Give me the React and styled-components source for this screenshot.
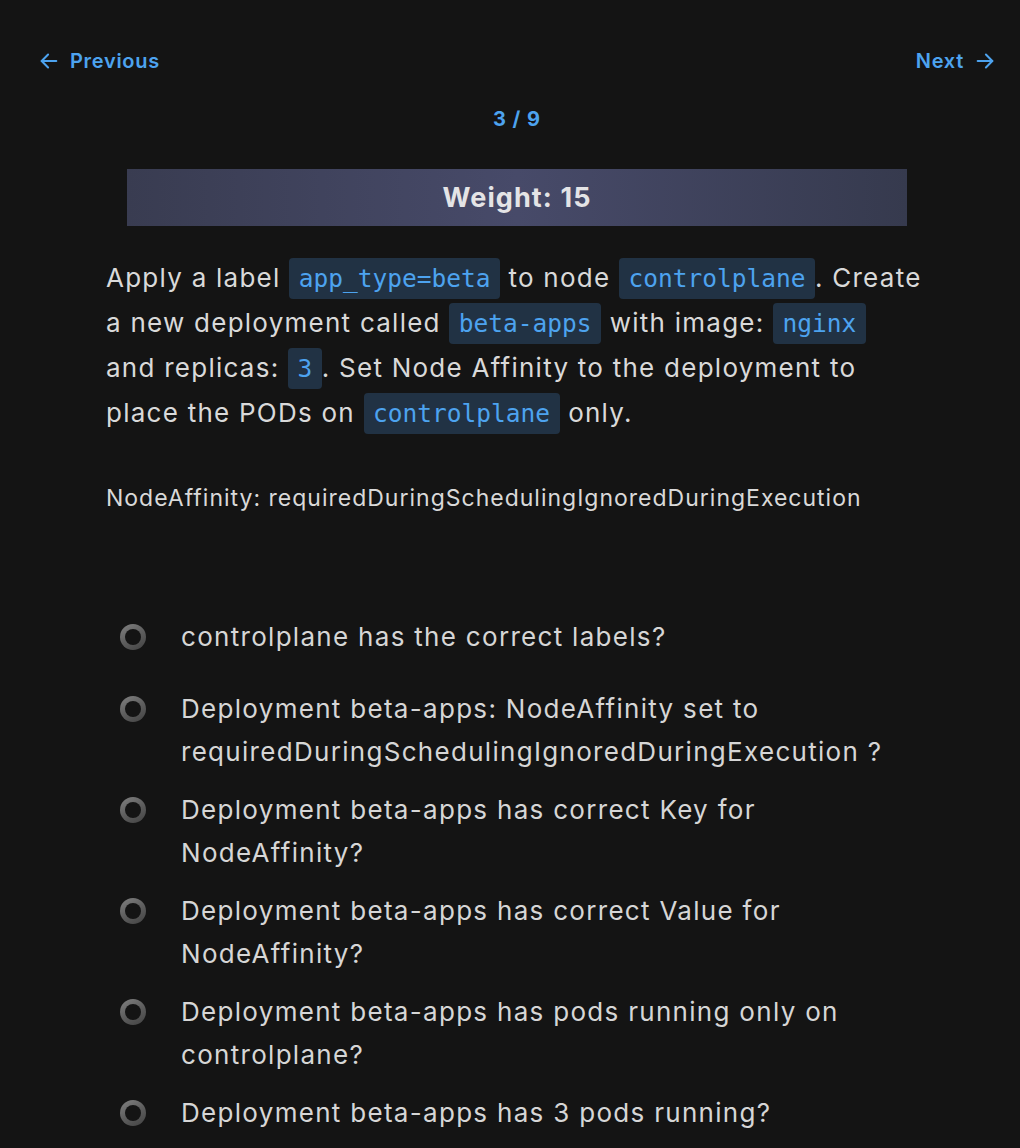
import React from "react";
import styled, { createGlobalStyle } from "styled-components";

const checks = [
  "controlplane has the correct labels?",
  "Deployment beta-apps: NodeAffinity set to requiredDuringSchedulingIgnoredDuringExecution ?",
  "Deployment beta-apps has correct Key for NodeAffinity?",
  "Deployment beta-apps has correct Value for NodeAffinity?",
  "Deployment beta-apps has pods running only on controlplane?",
  "Deployment beta-apps has 3 pods running?",
];

const GlobalStyle = createGlobalStyle`
  html, body {
    margin: 0;
    background: #141414;
  }
  body {
    font-family: "Inter", "Noto Sans", sans-serif;
    color: #d9d9d9;
  }
`;

const ArrowLeft = () => (
  <svg width="22" height="22" viewBox="0 0 24 24" fill="none" stroke="currentColor" strokeWidth="2.2" strokeLinecap="round" strokeLinejoin="round">
    <path d="M20 12H4" />
    <path d="M11 19l-7-7 7-7" />
  </svg>
);

const ArrowRight = () => (
  <svg width="22" height="22" viewBox="0 0 24 24" fill="none" stroke="currentColor" strokeWidth="2.2" strokeLinecap="round" strokeLinejoin="round">
    <path d="M4 12h16" />
    <path d="M13 5l7 7-7 7" />
  </svg>
);

const App = () => {
  return (
    <Page>
      <GlobalStyle />
      <NavBar>
        <NavLink>
          <ArrowLeft />
          Previous
        </NavLink>
        <NavLink>
          Next
          <ArrowRight />
        </NavLink>
      </NavBar>
      <Counter>3 / 9</Counter>
      <Question>
        <WeightBar>Weight: 15</WeightBar>
        <Prompt>
          Apply a label <Code>app_type=beta</Code> to node <Code>controlplane</Code>. Create
          a new deployment called <Code>beta-apps</Code> with image: <Code>nginx</Code>{" "}
          <NoWrap>and replicas:</NoWrap> <Code>3</Code>. Set Node Affinity to the deployment
          to place the PODs on <Code>controlplane</Code> only.
        </Prompt>
        <Note>NodeAffinity: requiredDuringSchedulingIgnoredDuringExecution</Note>
      </Question>
      <CheckList>
        {checks.map((text, index) => (
          <CheckItem key={index}>
            <Radio />
            <CheckText>{text}</CheckText>
          </CheckItem>
        ))}
      </CheckList>
    </Page>
  );
};

export default App;

const Page = styled.div`
  padding: 45px 24px 0 38px;
  min-height: 1148px;
  box-sizing: border-box;
`;

const NavBar = styled.div`
  display: flex;
  justify-content: space-between;
  align-items: center;
`;

const NavLink = styled.a`
  display: flex;
  align-items: center;
  gap: 10px;
  color: #4da3ef;
  font-size: 20px;
  font-weight: 600;
  letter-spacing: 0.7px;
  line-height: 32px;
  cursor: pointer;
`;

const Counter = styled.div`
  margin-top: 29px;
  text-align: center;
  color: #4da3ef;
  font-size: 20px;
  font-weight: 700;
  letter-spacing: 1px;
  line-height: 26px;
`;

const Question = styled.div`
  width: 822px;
  margin: 37px auto 0;
`;

const WeightBar = styled.div`
  width: 780px;
  height: 57px;
  margin: 0 auto;
  display: flex;
  align-items: center;
  justify-content: center;
  background: linear-gradient(90deg, #393c51 0%, #474a69 50%, #363a4e 100%);
  color: #e4e4e6;
  font-size: 27px;
  font-weight: 700;
  letter-spacing: 1.1px;
`;

const Prompt = styled.p`
  margin: 29px 0 0;
  font-size: 26px;
  line-height: 45px;
  letter-spacing: 1.25px;
  color: #d9d9d9;
`;

const NoWrap = styled.span`
  white-space: nowrap;
`;

const Code = styled.code`
  font-family: "DejaVu Sans Mono", "Liberation Mono", monospace;
  font-size: 24.5px;
  line-height: 0;
  letter-spacing: 0;
  color: #4da3ef;
  background: #213244;
  border-radius: 4px;
  padding: 6px 9.5px;
`;

const Note = styled.p`
  margin: 48px 0 0;
  font-size: 23px;
  line-height: 30px;
  letter-spacing: 1px;
  color: #d9d9d9;
`;

const CheckList = styled.ul`
  list-style: none;
  margin: 102px 0 0;
  padding: 0 0 0 82px;
  width: 800px;
  display: flex;
  flex-direction: column;
  gap: 15px;
`;

const CheckItem = styled.li`
  display: flex;
  align-items: flex-start;
  gap: 35px;
  min-height: 57px;
`;

const Radio = styled.span`
  flex: none;
  width: 26px;
  height: 26px;
  margin-top: 9px;
  border-radius: 50%;
  background: linear-gradient(150deg, #828282 0%, #5e5e5e 50%, #424242 100%);
  position: relative;

  &::after {
    content: "";
    position: absolute;
    inset: 5px;
    border-radius: 50%;
    background: #141414;
  }
`;

const CheckText = styled.span`
  font-size: 26px;
  line-height: 43px;
  letter-spacing: 1.3px;
  color: #d6d6d6;
`;
